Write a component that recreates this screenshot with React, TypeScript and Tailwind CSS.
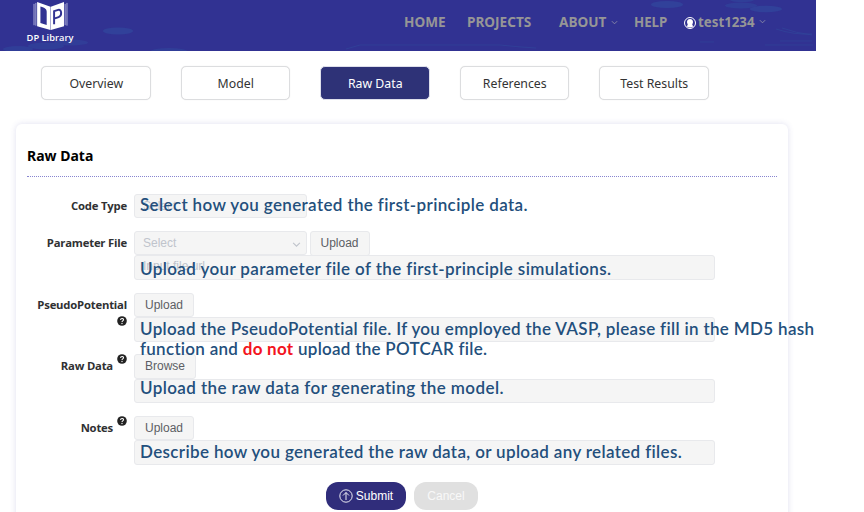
import React from "react";

const ui = "font-['Noto_Sans','Open_Sans',sans-serif]";
const arial = "font-['Liberation_Sans',Arial,sans-serif]";
const box = "box-border rounded-[3px] border border-[#e8e9ec] bg-[#f5f5f5]";

function Logo() {
  return (
    <svg width="35" height="31" viewBox="0 0 34 32" preserveAspectRatio="none" className="block">
      <path d="M1 4v22M2.800 3v23.500M31.200 4v22M33 3v23.500" stroke="#c9cae8" strokeWidth="0.8" />
      <path d="M4 2 17 7v24L4 27zM7.200 6.700v17l6.100 2.200V12.200c0-2.700-1.500-4.100-6.100-5.500z" fill="#fff" fillRule="evenodd" />
      <path d="m17.300 7 12.800-5v25l-12.800 4z" fill="#fff" />
      <path d="M20.500 25V11.600l4-1.400c3.400-1 4 6.200.4 7.500l-4.400 1.600" fill="none" stroke="#313292" strokeWidth="1.900" />
    </svg>
  );
}

function Chevron({ className, size = 7, color = "#8f8fa8" }: { className?: string; size?: number; color?: string }) {
  return (
    <svg width={size} height={size} viewBox="0 0 8 8" fill="none" stroke={color} strokeWidth="1" className={className}>
      <path d="m1 2.500 3 3 3-3" />
    </svg>
  );
}

function HeaderArt() {
  return (
    <svg className="absolute inset-0" width="816" height="51" fill="#31419a">
      <ellipse cx="118" cy="31" rx="15" ry="3.400" />
      <ellipse cx="71" cy="42.500" rx="17" ry="3" opacity=".75" />
      <ellipse cx="46" cy="46" rx="18" ry="3.500" opacity=".8" />
      <ellipse cx="18" cy="49" rx="15" ry="3" opacity=".8" />
      <ellipse cx="169" cy="51" rx="18" ry="3" opacity=".8" />
      <ellipse cx="667" cy="4.500" rx="16" ry="3.600" />
      <ellipse cx="741" cy="5.500" rx="16" ry="3" opacity=".8" />
      <ellipse cx="766" cy="9" rx="16" ry="3.200" />
      <ellipse cx="742" cy="0" rx="12" ry="2" opacity=".8" />
      <path d="M776 29q18 6 36 5M782 28q14 5 30 7M700 42h14M765 45h48M780 41h32M346 49l14-4h140q18 2 36 3" fill="none" stroke="#31479b" strokeWidth="1" opacity=".6" />
    </svg>
  );
}

function Help({ className }: { className: string }) {
  return (
    <svg width="10" height="10" viewBox="0 0 10 10" className={className}>
      <circle cx="5" cy="5" r="4.800" fill="#222" />
      <path d="M3.600 4c0-2 2.900-2 2.900-.2C6.500 4.900 5 4.800 5 6" fill="none" stroke="#fff" strokeWidth="1.100" />
      <circle cx="5" cy="7.500" r=".65" fill="#fff" />
    </svg>
  );
}

function Button({ children, className }: { children: React.ReactNode; className: string }) {
  return (
    <button type="button" className={`${box} ${arial} flex h-[24.5px] shrink-0 items-center justify-center text-[12px] text-[#5c5e64] ${className}`}>
      {children}
    </button>
  );
}

function Label({ children, className = "" }: { children: React.ReactNode; className?: string }) {
  return (
    <div className={`w-[100px] shrink-0 text-right font-['Open_Sans',sans-serif] text-[11.3px] leading-[24px] font-bold tracking-[-0.2px] whitespace-nowrap text-[#303133] ${className}`}>
      {children}
    </div>
  );
}

function Note({ children, className }: { children: React.ReactNode; className: string }) {
  return (
    <div className={`absolute left-[113px] z-10 font-['Lato',sans-serif] text-[17px] leading-[21px] font-semibold whitespace-nowrap text-[#234f7c] [font-variant-ligatures:none] ${className}`}>
      {children}
    </div>
  );
}

function Tab({ children, active }: { children: string; active?: boolean }) {
  return (
    <button
      type="button"
      className={`${ui} flex h-[34px] w-[109.5px] shrink-0 items-center justify-center rounded-[5px] border pt-[2px] pl-[1px] text-[12.3px] ${
        active ? "border-[#dedfeb] bg-[#2e3277] text-white" : "border-[#dcdddf] bg-white text-[#333] shadow-[0_0_1px_#ddd]"
      }`}
    >
      {children}
    </button>
  );
}

export default function App() {
  return (
    <div className="h-[512px] w-[864px] overflow-hidden bg-white">
      <header className="relative flex h-[51px] w-[816px] items-start bg-[#313292]">
        <HeaderArt />
        <div className="relative ml-[26px] w-[48px] shrink-0">
          <div className="flex justify-center"><Logo /></div>
          <div className="text-center font-['Open_Sans',sans-serif] text-[9.3px] leading-[13px] font-semibold whitespace-nowrap text-white">DP Library</div>
        </div>
        <nav className={`${ui} relative ml-[330px] flex h-[45px] items-center text-[13.6px] font-bold whitespace-nowrap text-[#969696]`}>
          <span className="w-[63px]">HOME</span>
          <span className="w-[92px]">PROJECTS</span>
          <span className="w-[52px]">ABOUT</span>
          <Chevron className="mr-[16px] mb-[1px]" />
          <span className="w-[50px] text-[13.3px]">HELP</span>
          <svg width="12" height="12" viewBox="0 0 12 12" className="mr-[2px]">
            <circle cx="6" cy="6" r="5.500" fill="none" stroke="#fff" />
            <path d="M6 2c2.200 0 3 1.300 3 3.300L8.200 8l1.300 1.200Q6 12 2.500 9.200L3.800 8 3 5.300C3 3.300 3.800 2 6 2z" fill="#fff" />
          </svg>
          <span className="w-[61px] text-[13.3px]">test1234</span>
          <Chevron className="mb-[2px]" />
        </nav>
      </header>

      <div className="flex gap-[30px] pt-[15px] pl-[41px]">
        <Tab>Overview</Tab>
        <Tab>Model</Tab>
        <Tab active>Raw Data</Tab>
        <Tab>References</Tab>
        <Tab>Test Results</Tab>
      </div>

      <main className="relative mt-[24px] ml-[16px] h-[420px] w-[772px] rounded-[6px] bg-white px-[11px] shadow-[0_0_6px_rgba(60,60,160,0.16)]">
        <h1 className={`${ui} h-[53px] border-b border-dotted border-[#8885d0] pt-[22px] text-[14px] leading-[20px] font-bold text-black`}>Raw Data</h1>
        <form className="flex flex-col pt-[17px]">
          <div className="relative flex h-[37px] items-start">
            <Label>Code Type</Label>
            <div className={`${box} ${arial} ml-[7px] h-[24px] w-[172.5px] pl-[8px] text-[12px] leading-[22px] text-[#c0c4cc]`}>Select</div>
            <Note className="top-0 tracking-[0.37px]">Select how you generated the first-principle data.</Note>
          </div>
          <div className="relative flex h-[61.5px] items-start">
            <Label>Parameter File</Label>
            <div className="ml-[7px]">
              <div className="flex gap-[3px]">
                <div className={`${box} ${arial} flex h-[24px] w-[172.5px] items-center justify-between pr-[5px] pl-[8px] text-[12px] text-[#c0c4cc]`}>
                  Select<Chevron size={9} color="#c0c4cc" className="mt-[3px]" />
                </div>
                <Button className="w-[60px]">Upload</Button>
              </div>
              <div className={`${box} ${arial} -mt-[0.5px] h-[24.5px] w-[581px] pl-[8px] text-[12px] leading-[21px] text-[#c0c4cc]`}>Input file url</div>
            </div>
            <Note className="top-[27px] tracking-[0.39px]">Upload your parameter file of the first-principle simulations.</Note>
          </div>
          <div className="relative flex h-[61.5px] items-start">
            <Label>PseudoPotential<Help className="-mt-[1px] ml-auto block" /></Label>
            <div className="ml-[7px]">
              <Button className="w-[60px]">Upload</Button>
              <div className={`${box} h-[24.5px] w-[581px]`} />
            </div>
            <Note className="top-[25px]">
              <div className="tracking-[0.33px]">Upload the PseudoPotential file. If you employed the VASP, please fill in the MD5 hash</div>
              <div className="-mt-[1px] tracking-[0.28px]">function and <span className="font-bold text-[#f31320]">do not</span> upload the POTCAR file.</div>
            </Note>
          </div>
          <div className="relative flex h-[61.5px] items-start">
            <Label className="flex justify-end gap-[4px]">Raw Data<Help className="block" /></Label>
            <div className="ml-[7px]">
              <Button className="w-[62px]">Browse</Button>
              <div className={`${box} h-[24.5px] w-[581px]`} />
            </div>
            <Note className="top-[23px] tracking-[0.41px]">Upload the raw data for generating the model.</Note>
          </div>
          <div className="relative flex h-[66px] items-start">
            <Label className="flex justify-end gap-[4px]">Notes<Help className="block" /></Label>
            <div className="ml-[7px]">
              <Button className="w-[60px]">Upload</Button>
              <div className={`${box} h-[24.5px] w-[581px]`} />
            </div>
            <Note className="top-[25px] tracking-[0.35px]">Describe how you generated the raw data, or upload any related files.</Note>
          </div>
          <div className={`${arial} ml-[299px] flex gap-[8px] text-[12px]`}>
            <button type="button" className="flex h-[28px] w-[80px] items-center justify-center gap-[3px] rounded-[12px] bg-[#302d7b] text-white">
              <svg width="14" height="14" viewBox="0 0 14 14" fill="none" stroke="#fff" strokeWidth=".9">
                <circle cx="7" cy="7" r="6.200" /><path d="M7 11V3.500M4 6.500l3-3 3 3" />
              </svg>
              Submit
            </button>
            <button type="button" className="h-[28px] w-[64px] rounded-[12px] bg-[#e0e0e0] text-[#f8f8f8]">Cancel</button>
          </div>
        </form>
      </main>
    </div>
  );
}
